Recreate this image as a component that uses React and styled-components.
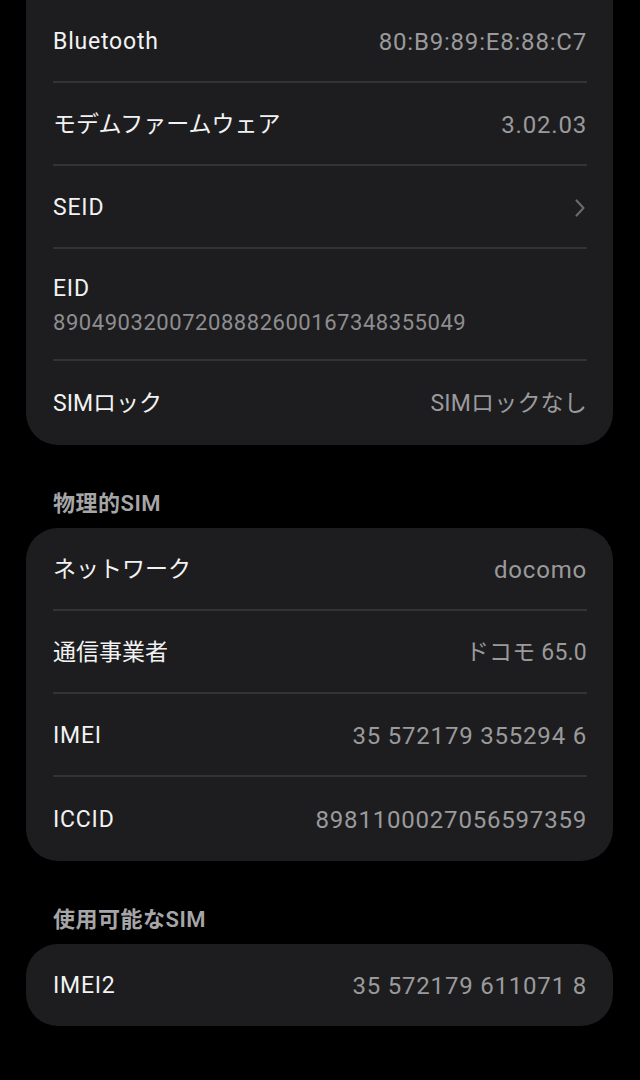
import React from "react";
import styled, { createGlobalStyle } from "styled-components";

const Global = createGlobalStyle`
  html, body { margin: 0; padding: 0; background: #000; }
  body { font-family: Roboto, "Noto Sans CJK JP", sans-serif; -webkit-font-smoothing: antialiased; }
`;

const Page = styled.div`
  width: 640px;
  height: 1080px;
  overflow: hidden;
  background: #000;
  padding: 0 27px 0 26px;
  box-sizing: border-box;
`;

const Card = styled.div`
  background: #1d1d1f;
  border-radius: ${(p) => (p.$cut ? "0 0 32px 32px" : "32px")};
  padding: 0 26px 0 27px;
`;

const Row = styled.div`
  height: ${(p) => p.$h || 83}px;
  padding-top: 2px;
  display: flex;
  flex-direction: ${(p) => (p.$stack ? "column" : "row")};
  justify-content: ${(p) => (p.$stack ? "center" : "space-between")};
  align-items: ${(p) => (p.$stack ? "flex-start" : "center")};
  gap: ${(p) => (p.$stack ? "7px" : "0")};
  border-bottom: ${(p) => (p.$last ? "none" : "2px solid #333336")};
  box-sizing: border-box;
`;

const Label = styled.span`
  color: #f2f2f2;
  font-size: 23px;
  line-height: 28px;
  letter-spacing: ${(p) => (p.$lat ? "0.8px" : "0")};
`;

const Value = styled.span`
  color: #9a9a9c;
  font-size: ${(p) => (p.$lat ? "24px" : "23px")};
  line-height: 28px;
  letter-spacing: ${(p) => (p.$lat ? "0.8px" : "0.2px")};
`;

const SubValue = styled.span`
  color: #8e8e90;
  font-size: 22px;
  line-height: 26px;
  letter-spacing: 0.55px;
`;

const Header = styled.div`
  height: 83px;
  display: flex;
  align-items: flex-end;
  padding: 0 0 12px 27px;
  box-sizing: border-box;
  color: #a6a6a8;
  font-size: 22px;
  font-weight: 600;
  line-height: 24px;
  letter-spacing: 0.5px;
`;

const Chevron = () => (
  <svg width="12" height="20" viewBox="0 0 12 20" style={{ marginRight: 1 }}>
    <path d="M2.5 2.5 L9.5 10 L2.5 17.5" fill="none" stroke="#69696b" strokeWidth="2.2" strokeLinecap="round" strokeLinejoin="round" />
  </svg>
);

export default function App() {
  return (
    <Page>
      <Global />
      <Card $cut>
        <Row>
          <Label $lat>Bluetooth</Label>
          <Value $lat>80:B9:89:E8:88:C7</Value>
        </Row>
        <Row>
          <Label>モデムファームウェア</Label>
          <Value $lat>3.02.03</Value>
        </Row>
        <Row>
          <Label $lat>SEID</Label>
          <Chevron />
        </Row>
        <Row $h={112} $stack>
          <Label $lat>EID</Label>
          <SubValue>89049032007208882600167348355049</SubValue>
        </Row>
        <Row $h={84} $last>
          <Label>SIMロック</Label>
          <Value>SIMロックなし</Value>
        </Row>
      </Card>
      <Header>物理的SIM</Header>
      <Card>
        <Row>
          <Label>ネットワーク</Label>
          <Value $lat>docomo</Value>
        </Row>
        <Row>
          <Label>通信事業者</Label>
          <Value>ドコモ 65.0</Value>
        </Row>
        <Row>
          <Label $lat>IMEI</Label>
          <Value $lat>35 572179 355294 6</Value>
        </Row>
        <Row $h={84} $last>
          <Label $lat>ICCID</Label>
          <Value $lat>8981100027056597359</Value>
        </Row>
      </Card>
      <Header>使用可能なSIM</Header>
      <Card>
        <Row $h={82} $last>
          <Label $lat>IMEI2</Label>
          <Value $lat>35 572179 611071 8</Value>
        </Row>
      </Card>
    </Page>
  );
}
